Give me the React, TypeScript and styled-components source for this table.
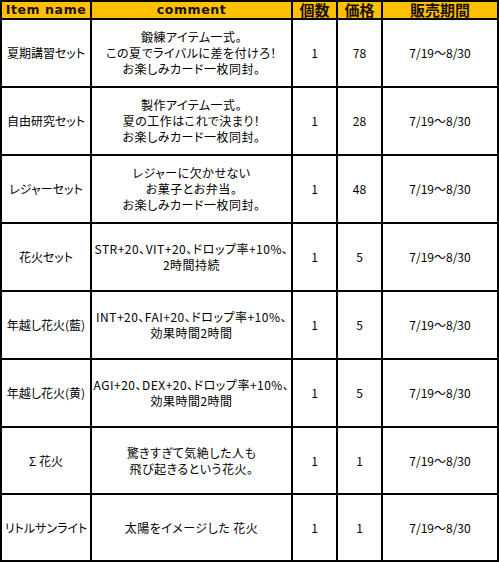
import React from 'react';
import styled, { createGlobalStyle } from 'styled-components';

const GlobalStyle = createGlobalStyle`
  html, body {
    margin: 0;
    padding: 0;
    background: #fff;
  }
`;

type Item = {
  name: string;
  comment: string[];
  count: string;
  price: string;
  period: string;
};

const items: Item[] = [
  {
    name: '夏期講習セット',
    comment: ['鍛練アイテム一式。', 'この夏でライバルに差を付けろ！', 'お楽しみカード一枚同封。'],
    count: '1',
    price: '78',
    period: '7/19～8/30',
  },
  {
    name: '自由研究セット',
    comment: ['製作アイテム一式。', '夏の工作はこれで決まり！', 'お楽しみカード一枚同封。'],
    count: '1',
    price: '28',
    period: '7/19～8/30',
  },
  {
    name: 'レジャーセット',
    comment: ['レジャーに欠かせない', 'お菓子とお弁当。', 'お楽しみカード一枚同封。'],
    count: '1',
    price: '48',
    period: '7/19～8/30',
  },
  {
    name: '花火セット',
    comment: ['STR+20、VIT+20、ドロップ率+10%、', '2時間持続'],
    count: '1',
    price: '5',
    period: '7/19～8/30',
  },
  {
    name: '年越し花火(藍)',
    comment: ['INT+20、FAI+20、ドロップ率+10%、', '効果時間2時間'],
    count: '1',
    price: '5',
    period: '7/19～8/30',
  },
  {
    name: '年越し花火(黄)',
    comment: ['AGI+20、DEX+20、ドロップ率+10%、', '効果時間2時間'],
    count: '1',
    price: '5',
    period: '7/19～8/30',
  },
  {
    name: 'Σ 花火',
    comment: ['驚きすぎて気絶した人も', '飛び起きるという花火。'],
    count: '1',
    price: '1',
    period: '7/19～8/30',
  },
  {
    name: 'リトルサンライト',
    comment: ['太陽をイメージした 花火'],
    count: '1',
    price: '1',
    period: '7/19～8/30',
  },
];

const rowHeights = [68, 68, 68, 68, 68, 68, 67, 67];

export default function App(): JSX.Element {
  return (
    <>
      <GlobalStyle />
      <Table>
        <colgroup>
          <col style={{ width: 90 }} />
          <col style={{ width: 201 }} />
          <col style={{ width: 45 }} />
          <col style={{ width: 45 }} />
          <col style={{ width: 116 }} />
        </colgroup>
        <thead>
          <HeadRow>
            <HeadCell latin>Item name</HeadCell>
            <HeadCell latin>comment</HeadCell>
            <HeadCell>個数</HeadCell>
            <HeadCell>価格</HeadCell>
            <HeadCell>販売期間</HeadCell>
          </HeadRow>
        </thead>
        <tbody>
          {items.map((item, index) => (
            <Row key={index} $h={rowHeights[index]}>
              <Cell>{item.name}</Cell>
              <Cell>
                {item.comment.map((line, i) => (
                  <Line key={i}>{line}</Line>
                ))}
              </Cell>
              <Cell>{item.count}</Cell>
              <Cell>{item.price}</Cell>
              <Cell>{item.period}</Cell>
            </Row>
          ))}
        </tbody>
      </Table>
    </>
  );
}

const Table = styled.table`
  width: 499px;
  table-layout: fixed;
  border-collapse: collapse;
  border: 2px solid #000;
  font-family: 'Noto Sans CJK JP', 'DejaVu Sans', sans-serif;
  font-size: 12px;
  color: #000;
`;

const HeadRow = styled.tr`
  height: 18px;
  background: #ffc000;
`;

const HeadCell = styled.th<{ latin?: boolean }>`
  border: 2px solid #000;
  padding: 0;
  text-align: center;
  font-weight: bold;
  line-height: 16px;
  font-family: ${(p) =>
    p.latin
      ? "'DejaVu Sans', 'Noto Sans CJK JP', sans-serif"
      : "'Noto Sans CJK JP', sans-serif"};
  font-size: ${(p) => (p.latin ? '12.5px' : '15px')};
  letter-spacing: ${(p) => (p.latin ? '0.6px' : '0')};
  color: #1a1000;
`;

const Row = styled.tr<{ $h: number }>`
  height: ${(p) => p.$h}px;
`;

const Cell = styled.td`
  border: 2px solid #000;
  padding: 0;
  text-align: center;
  vertical-align: middle;
  line-height: 16px;
  white-space: nowrap;
  overflow: visible;
  font-feature-settings: 'palt';
`;

const Line = styled.div`
  white-space: nowrap;
  letter-spacing: 0.5px;
`;
